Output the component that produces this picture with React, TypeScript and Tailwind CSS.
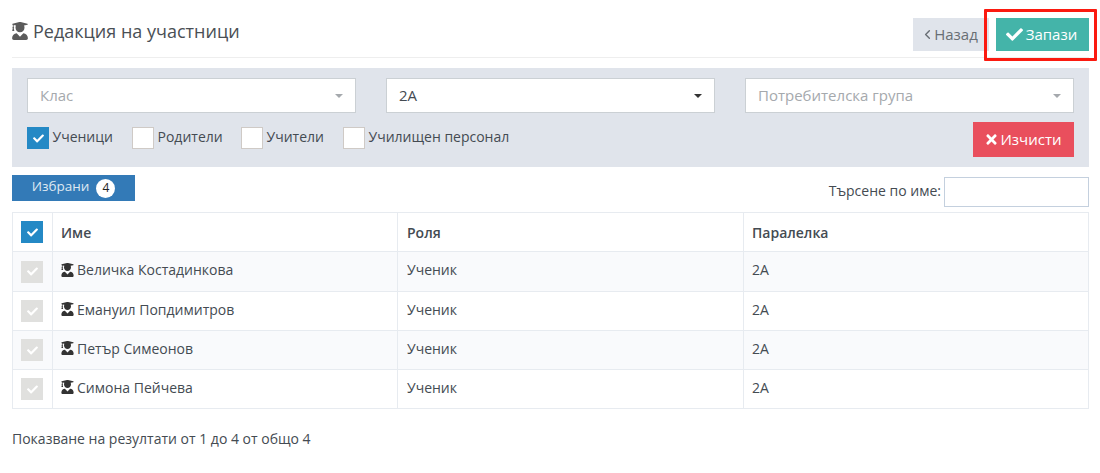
import { FaUserGraduate, FaCheck, FaTimes } from 'react-icons/fa';
import { ChevronLeft } from 'lucide-react';

const rows = [
  { name: 'Величка Костадинкова', rowClass: 'h-10' },
  { name: 'Емануил Попдимитров', rowClass: 'h-[39px]' },
  { name: 'Петър Симеонов', rowClass: 'h-[39px]' },
  { name: 'Симона Пейчева', rowClass: 'h-[39px]' },
];

const Select = ({ label, filled }: { label: string; filled?: boolean }) => (
  <div className="flex h-[35px] w-[329px] items-center justify-between border border-[#cbd0d4] bg-white pl-[12px] pr-[12px]">
    <span className={filled ? 'text-[15px] text-[#444b52]' : 'text-[15px] text-[#a5a9ad]'}>{label}</span>
    <span className={filled ? 'h-0 w-0 border-x-[4px] border-t-[4px] border-x-transparent border-t-[#333]' : 'h-0 w-0 border-x-[4px] border-t-[4px] border-x-transparent border-t-[#a5a9ad]'} />
  </div>
);

const Check = ({ label, checked, className }: { label: string; checked?: boolean; className: string }) => (
  <div className={`flex items-center ${className}`}>
    {checked ? (
      <span className="flex h-[22px] w-[22px] items-center justify-center bg-[#2489c5] text-white">
        <FaCheck className="h-[11px] w-[11px]" />
      </span>
    ) : (
      <span className="h-[22px] w-[22px] border border-[#cfcac6] bg-white" />
    )}
    <span className="ml-[3.5px] pb-[2px] text-[14px] leading-[14px] text-[#444b52]">{label}</span>
  </div>
);

export default function App() {
  return (
    <div className="relative h-[473px] w-[1100px] overflow-hidden bg-white pl-[12px] pr-[11px] font-['Open_Sans',sans-serif] text-[#444b52]">
      {/* header */}
      <div className="flex h-[58px] items-start justify-between border-b border-[#eeeeee] pt-[18px]">
        <div className="flex items-center pt-[1px]">
          <FaUserGraduate className="h-[18px] w-[16px] text-[#5b5b5b]" />
          <span className="ml-[5px] text-[18px] leading-[24px] text-[#4a4f55]">Редакция на участници</span>
        </div>
        <div className="flex">
          <button className="flex h-[33px] w-[76px] items-center justify-center bg-[#e0e4eb] pr-[2px] text-[15px] text-[#686e74]">
            <ChevronLeft className="-ml-[2px] mr-[-1px] h-[17px] w-[15px]" strokeWidth={2.25} />
            Назад
          </button>
          <button className="ml-[7px] flex h-[33px] w-[93px] items-center justify-center bg-[#44b4a9] pr-[2px] text-[15px] text-white">
            <FaCheck className="mr-[3px] h-[17px] w-[17px]" />
            Запази
          </button>
        </div>
      </div>

      {/* filters */}
      <div className="mt-[10px] h-[99px] bg-[#e0e4eb] px-[15px] pt-[10px]">
        <div className="flex justify-between">
          <Select label="Клас" />
          <Select label="2А" filled />
          <Select label="Потребителска група" />
        </div>
        <div className="mt-[9px] flex items-start justify-between">
          <div className="flex pt-[5px]">
            <Check label="Ученици" checked className="w-[105px]" />
            <Check label="Родители" className="w-[109px]" />
            <Check label="Учители" className="w-[102px]" />
            <Check label="Училищен персонал" className="" />
          </div>
          <button className="flex h-[35px] w-[101px] items-center justify-center bg-[#e94f5d] text-[15px] text-white">
            <FaTimes className="mr-[2px] h-[15px] w-[13px]" />
            Изчисти
          </button>
        </div>
      </div>

      {/* selected tab and search */}
      <div className="mt-[8px] flex items-start justify-between">
        <div className="flex h-[26px] w-[123px] items-center justify-center bg-[#337ab7] text-[13.5px] text-[#dfe9f2]">
          <span className="pb-[4px]">Избрани</span>
          <span className="ml-[7px] flex h-[19px] w-[19px] items-center justify-center rounded-full bg-white text-[12px] text-[#222]">4</span>
        </div>
        <div className="mt-[2px] flex items-center">
          <span className="mr-[3px] pb-[4px] text-[14px] text-[#444b52]">Търсене по име:</span>
          <input className="h-[30px] w-[145px] border border-[#c4d0de] bg-white outline-none" />
        </div>
      </div>

      {/* table */}
      <table className="mt-[5px] w-[1076px] table-fixed border-collapse text-[14px] text-[#444b52]">
        <colgroup>
          <col className="w-[40px]" />
          <col className="w-[345px]" />
          <col className="w-[346px]" />
          <col className="w-[345px]" />
        </colgroup>
        <thead>
          <tr className="h-[39px]">
            <th className="border border-[#e7ebf0] px-[8px]">
              <span className="flex h-[22px] w-[22px] items-center justify-center bg-[#2489c5] text-white">
                <FaCheck className="h-[11px] w-[11px]" />
              </span>
            </th>
            <th className="border border-[#e7ebf0] px-[8px] text-left font-semibold">Име</th>
            <th className="border border-[#e7ebf0] px-[9px] text-left font-semibold">Роля</th>
            <th className="border border-[#e7ebf0] px-[8px] text-left font-semibold">Паралелка</th>
          </tr>
        </thead>
        <tbody>
          {rows.map((row, i) => (
            <tr key={row.name} className={`${row.rowClass} ${i % 2 === 0 ? 'bg-[#f9fafc]' : 'bg-white'}`}>
              <td className="border border-[#e7ebf0] px-[8px]">
                <span className="flex h-[22px] w-[22px] items-center justify-center bg-[#e0e0de] text-white">
                  <FaCheck className="h-[11px] w-[11px]" />
                </span>
              </td>
              <td className="border border-[#e7ebf0] px-[8px] pb-[4px]">
                <span className="flex items-center">
                  <FaUserGraduate className="mr-[3px] h-[14px] w-[13px] text-[#333]" />
                  {row.name}
                </span>
              </td>
              <td className="border border-[#e7ebf0] px-[9px] pb-[4px]">Ученик</td>
              <td className="border border-[#e7ebf0] px-[8px] pb-[4px]">2А</td>
            </tr>
          ))}
        </tbody>
      </table>

      <p className="mt-[20px] text-[14px] leading-[20px] text-[#444b52]">Показване на резултати от 1 до 4 от общо 4</p>

      {/* red highlight drawn over the save button */}
      <div className="pointer-events-none absolute left-[984px] top-[9px] h-[52px] w-[113px] rounded-[1px] border-[3px] border-[#fb1a10]" />
    </div>
  );
}
